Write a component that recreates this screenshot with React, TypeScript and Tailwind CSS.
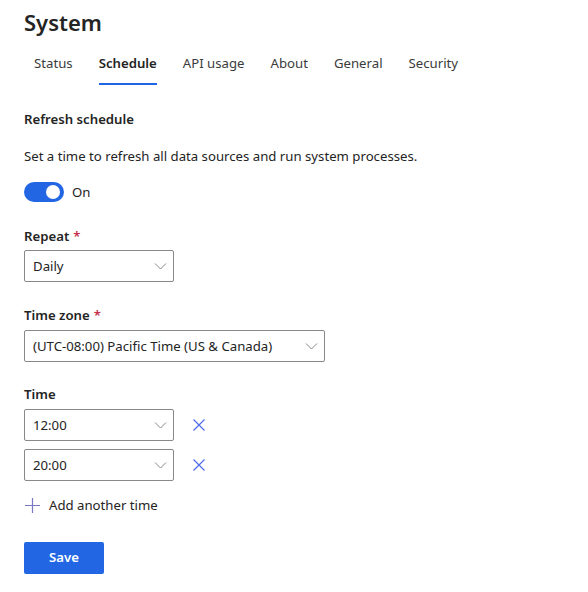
import React, { useState } from 'react'

const TABS = ['Status', 'Schedule', 'API usage', 'About', 'General', 'Security']

const Chevron = () => (
  <svg width="13" height="12" viewBox="0 0 13 12" fill="none" className="shrink-0">
    <path d="M1 3.5L6.5 9L12 3.5" stroke="#8a8886" strokeWidth="1" />
  </svg>
)

const Dismiss = () => (
  <svg width="14" height="14" viewBox="0 0 14 14" fill="none">
    <path d="M1.5 1.5L12.5 12.5M12.5 1.5L1.5 12.5" stroke="#4f6bed" strokeWidth="1.2" />
  </svg>
)

const Select = ({ value, width }: { value: string; width: string }) => (
  <div className={`${width} h-[32px] flex items-center justify-between border border-[#8a8886] rounded-[2px] pl-[8px] pr-[6px] bg-white`}>
    <span className="text-[13.2px] leading-[20px] text-[#242424]">{value}</span>
    <Chevron />
  </div>
)

const Label = ({ text, required }: { text: string; required?: boolean }) => (
  <p className="text-[13.2px] leading-[20px] font-semibold text-[#242424]">
    {text}
    {required && <span className="text-[#c4314b] ml-[4px]">*</span>}
  </p>
)

export default function App() {
  const [on, setOn] = useState(true)

  return (
    <div className="w-[588px] h-[592px] bg-white pl-[24px] text-[#242424]" style={{ fontFamily: '"Noto Sans", "Open Sans", sans-serif' }}>
      <h1 className="pt-[6px] text-[22px] leading-[32px] font-semibold">System</h1>

      <div className="flex gap-[26px] pl-[10px] mt-[5px]">
        {TABS.map((t) => (
          <div key={t} className={`pt-[10px] pb-[10px] border-b-2 text-[13.2px] leading-[20px] ${t === 'Schedule' ? 'border-[#1f66e5] font-semibold' : 'border-transparent text-[#3b3b3b]'}`}>
            {t}
          </div>
        ))}
      </div>

      <p className="mt-[24px] text-[13.2px] leading-[20px] font-semibold">Refresh schedule</p>
      <p className="mt-[17px] text-[13.2px] leading-[20px]">Set a time to refresh all data sources and run system processes.</p>

      <div className="mt-[16px] flex items-center gap-[8px]">
        <button
          onClick={() => setOn(!on)}
          className={`w-[40px] h-[20px] rounded-full flex items-center px-[4px] ${on ? 'bg-[#2266e3] justify-end' : 'bg-white border border-[#616161] justify-start'}`}
        >
          <span className="w-[14px] h-[14px] rounded-full bg-white" />
        </button>
        <span className="text-[13.2px] leading-[20px]">{on ? 'On' : 'Off'}</span>
      </div>

      <div className="mt-[24px]">
        <Label text="Repeat" required />
      </div>
      <div className="mt-[4px]">
        <Select value="Daily" width="w-[150px]" />
      </div>

      <div className="mt-[23px]">
        <Label text="Time zone" required />
      </div>
      <div className="mt-[5px]">
        <Select value="(UTC-08:00) Pacific Time (US & Canada)" width="w-[301px]" />
      </div>

      <div className="mt-[22px]">
        <Label text="Time" />
      </div>
      <div className="mt-[5px] flex flex-col gap-[8px]">
        {['12:00', '20:00'].map((v) => (
          <div key={v} className="flex items-center gap-[18px]">
            <Select value={v} width="w-[150px]" />
            <Dismiss />
          </div>
        ))}
      </div>

      <div className="mt-[14px] flex items-center gap-[8px]">
        <svg width="17" height="17" viewBox="0 0 17 17" fill="none">
          <path d="M8.5 1V16M1 8.5H16" stroke="#7a78c0" strokeWidth="1.2" />
        </svg>
        <span className="text-[13.2px] leading-[20px] text-[#242424]">Add another time</span>
      </div>

      <button className="mt-[27px] w-[80px] h-[32px] rounded-[2px] bg-[#2266e3] text-white text-[13.2px] font-semibold">
        Save
      </button>
    </div>
  )
}
